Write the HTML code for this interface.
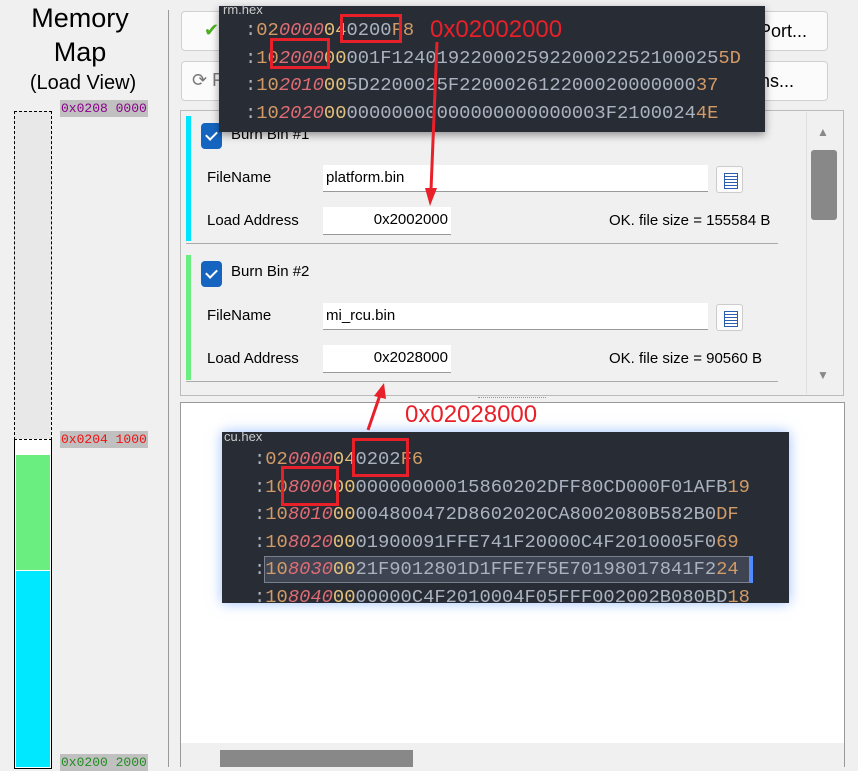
<!DOCTYPE html>
<html><head><meta charset="utf-8"><style>
*{margin:0;padding:0;box-sizing:border-box}
body{width:858px;height:767px;overflow:hidden;background:#f0f0f0;position:relative;font-family:"Liberation Sans",sans-serif;color:#000}
.a{position:absolute}
.lbl{position:absolute;font-family:"Liberation Mono",monospace;font-size:13px;background:#c0c0c0;padding:1px 1px;line-height:15px}
.btn{position:absolute;background:#fbfbfb;border:1px solid #d0d0d0;border-radius:4px}
.inp{position:absolute;background:#fff;border-bottom:1px solid #999;font-size:15px;line-height:26px;padding-left:3px}
.t{position:absolute;font-size:15px}
.cb{position:absolute;width:21px;height:26px;background:#1565c0;border-radius:4px}
.cb:after{content:"";position:absolute;left:5px;top:8px;width:9px;height:5px;border-left:2px solid #fff;border-bottom:2px solid #fff;transform:rotate(-45deg)}
.br{position:absolute;width:27px;height:27px;background:#fbfbfb;border:1px solid #ccc;border-radius:3px}
.br:after{content:"";position:absolute;left:7px;top:6px;width:12px;height:14px;border:1.5px solid #2a5db0;background:repeating-linear-gradient(#fff 0 2px,#2a5db0 2px 3px)}
.pop{position:absolute;background:#282c34;font-family:"Liberation Mono",monospace;white-space:pre;color:#abb2bf}
.o{color:#d19a66}.r{color:#e06c75;font-style:italic}.y{color:#e5c07b}
.box{position:absolute;border:3px solid #e8202a}
.red{position:absolute;color:#e8202a;font-size:24px}
</style></head><body>
<div class="a" style="left:0;top:1px;width:160px;text-align:center;font-size:27px;line-height:34px">Memory<br>Map</div>
<div class="a" style="left:0;top:72px;width:166px;text-align:center;font-size:20px">(Load View)</div>
<div class="a" style="left:14px;top:111px;width:38px;height:329px;background:#e8e8e8;border:1px dashed #000;border-bottom:none"></div>
<div class="a" style="left:14px;top:439px;width:38px;height:330px;background:#fff;border:1px solid #000;border-top:1px dashed #000"></div>
<div class="a" style="left:16px;top:455px;width:34px;height:115px;background:#6aee7f"></div>
<div class="a" style="left:16px;top:571px;width:34px;height:196px;background:#00e8ff"></div>
<div class="lbl" style="left:60px;top:100px;color:#8b008b">0x0208 0000</div>
<div class="lbl" style="left:60px;top:431px;color:#f01010">0x0204 1000</div>
<div class="lbl" style="left:60px;top:754px;color:#228b22">0x0200 2000</div>
<div class="a" style="left:168px;top:10px;width:1px;height:757px;background:#999"></div>
<div class="btn" style="left:181px;top:11px;width:60px;height:40px"><span class="a" style="left:22px;top:8px;color:#4caf20;font-size:18px">✔</span></div>
<div class="btn" style="left:740px;top:11px;width:88px;height:40px"><span class="a" style="left:18px;top:9px;font-size:18px">Port...</span></div>
<div class="btn" style="left:181px;top:61px;width:60px;height:40px"><span class="a" style="left:10px;top:8px;color:#777;font-size:18px">⟳ R</span></div>
<div class="btn" style="left:740px;top:61px;width:88px;height:40px"><span class="a" style="left:14px;top:9px;font-size:18px">ms...</span></div>
<div class="a" style="left:180px;top:110px;width:664px;height:286px;border:1px solid #bbb;background:#f0f0f0"></div>
<div class="a" style="left:806px;top:112px;width:32px;height:282px;border-left:1px solid #e0e0e0"></div>
<div class="a" style="left:817px;top:125px;color:#888;font-size:12px">▲</div>
<div class="a" style="left:811px;top:150px;width:26px;height:70px;background:#888;border-radius:3px"></div>
<div class="a" style="left:817px;top:368px;color:#888;font-size:12px">▼</div>
<div class="a" style="left:186px;top:116px;width:5px;height:125px;background:#00e5ff"></div>
<div class="cb" style="left:201px;top:123px"></div><div class="t" style="left:231px;top:126px">Burn Bin #1</div>
<div class="t" style="left:207px;top:169px">FileName</div>
<div class="inp" style="left:323px;top:165px;width:385px;height:27px">platform.bin</div>
<div class="br" style="left:716px;top:166px"></div>
<div class="t" style="left:207px;top:212px">Load Address</div>
<div class="inp" style="left:323px;top:207px;width:128px;height:28px;text-align:right;padding-right:3px">0x2002000</div>
<div class="t" style="left:609px;top:212px">OK. file size = 155584 B</div>
<div class="a" style="left:186px;top:243px;width:592px;height:1px;background:#aaa"></div>
<div class="a" style="left:186px;top:255px;width:5px;height:125px;background:#6aee7f"></div>
<div class="cb" style="left:201px;top:261px"></div><div class="t" style="left:231px;top:263px">Burn Bin #2</div>
<div class="t" style="left:207px;top:307px">FileName</div>
<div class="inp" style="left:323px;top:303px;width:385px;height:27px">mi_rcu.bin</div>
<div class="br" style="left:716px;top:304px"></div>
<div class="t" style="left:207px;top:350px">Load Address</div>
<div class="inp" style="left:323px;top:345px;width:128px;height:28px;text-align:right;padding-right:3px">0x2028000</div>
<div class="t" style="left:609px;top:350px">OK. file size = 90560 B</div>
<div class="a" style="left:186px;top:381px;width:592px;height:1px;background:#aaa"></div>
<div class="a" style="left:478px;top:397px;width:68px;height:2px;border-top:1px dotted #999"></div>
<div class="a" style="left:180px;top:402px;width:665px;height:365px;background:#fff;border:1px solid #999"></div>
<div class="a" style="left:181px;top:743px;width:663px;height:24px;background:#f0f0f0"></div>
<div class="a" style="left:220px;top:750px;width:193px;height:17px;background:#888"></div>

<div class="pop" style="left:219px;top:6px;width:546px;height:126px;box-shadow:0 3px 8px rgba(0,0,0,.4);font-size:18.8px;line-height:27.5px;padding:11px 0 0 26px"><span class="a" style="left:4px;top:-10px;font-family:'Liberation Sans';font-size:13px;color:#ccc">rm.hex</span>:<span class="o">02</span><span class="r">0000</span><span class="y">04</span>0200<span class="o">F8</span>
:<span class="o">10</span><span class="r">2000</span><span class="y">00</span>001F12401922000259220002252100025<span class="o">5D</span>
:<span class="o">10</span><span class="r">2010</span><span class="y">00</span>5D2200025F220002612200020000000<span class="o">37</span>
:<span class="o">10</span><span class="r">2020</span><span class="y">00</span>00000000000000000000003F2100024<span class="o">4E</span></div>
<div class="box" style="left:340px;top:14px;width:62px;height:29px"></div>
<div class="box" style="left:270px;top:38px;width:60px;height:31px"></div>
<div class="red" style="left:430px;top:16px">0x02002000</div>

<div class="pop" style="left:222px;top:432px;width:567px;height:171px;box-shadow:0 0 12px rgba(90,150,255,.6);font-size:18.8px;line-height:27.6px;padding:14px 0 0 32px;overflow:hidden"><div class="a" style="left:42px;top:124px;width:486px;height:27px;background:#3e4451;border:1px solid #7a8090"></div><div class="a" style="left:527px;top:124px;width:4px;height:27px;background:#528bff"></div><span class="a" style="left:2px;top:-9px;font-family:'Liberation Sans';font-size:13px;color:#ccc">cu.hex</span><span style="position:relative">:<span class="o">02</span><span class="r">0000</span><span class="y">04</span>0202<span class="o">F6</span>
:<span class="o">10</span><span class="r">8000</span><span class="y">00</span>00000000015860202DFF80CD000F01AFB<span class="o">19</span>
:<span class="o">10</span><span class="r">8010</span><span class="y">00</span>004800472D8602020CA8002080B582B0<span class="o">DF</span>
:<span class="o">10</span><span class="r">8020</span><span class="y">00</span>01900091FFE741F20000C4F2010005F0<span class="o">69</span>
:<span class="o">10</span><span class="r">8030</span><span class="y">00</span>21F9012801D1FFE7F5E70198017841F2<span class="o">24</span>
:<span class="o">10</span><span class="r">8040</span><span class="y">00</span>00000C4F2010004F05FFF002002B080BD<span class="o">18</span></span></div>
<div class="box" style="left:352px;top:438px;width:57px;height:39px"></div>
<div class="box" style="left:281px;top:466px;width:58px;height:40px"></div>
<div class="red" style="left:405px;top:401px">0x02028000</div>

<svg class="a" style="left:0;top:0" width="858" height="767">
<line x1="437" y1="42" x2="431" y2="190" stroke="#e8202a" stroke-width="3"/>
<polygon points="425,188 437,188 430,206" fill="#e8202a"/>
<line x1="368" y1="430" x2="380" y2="395" stroke="#e8202a" stroke-width="3"/>
<polygon points="374,396 386,399 384,383" fill="#e8202a"/>
</svg>
</body></html>
